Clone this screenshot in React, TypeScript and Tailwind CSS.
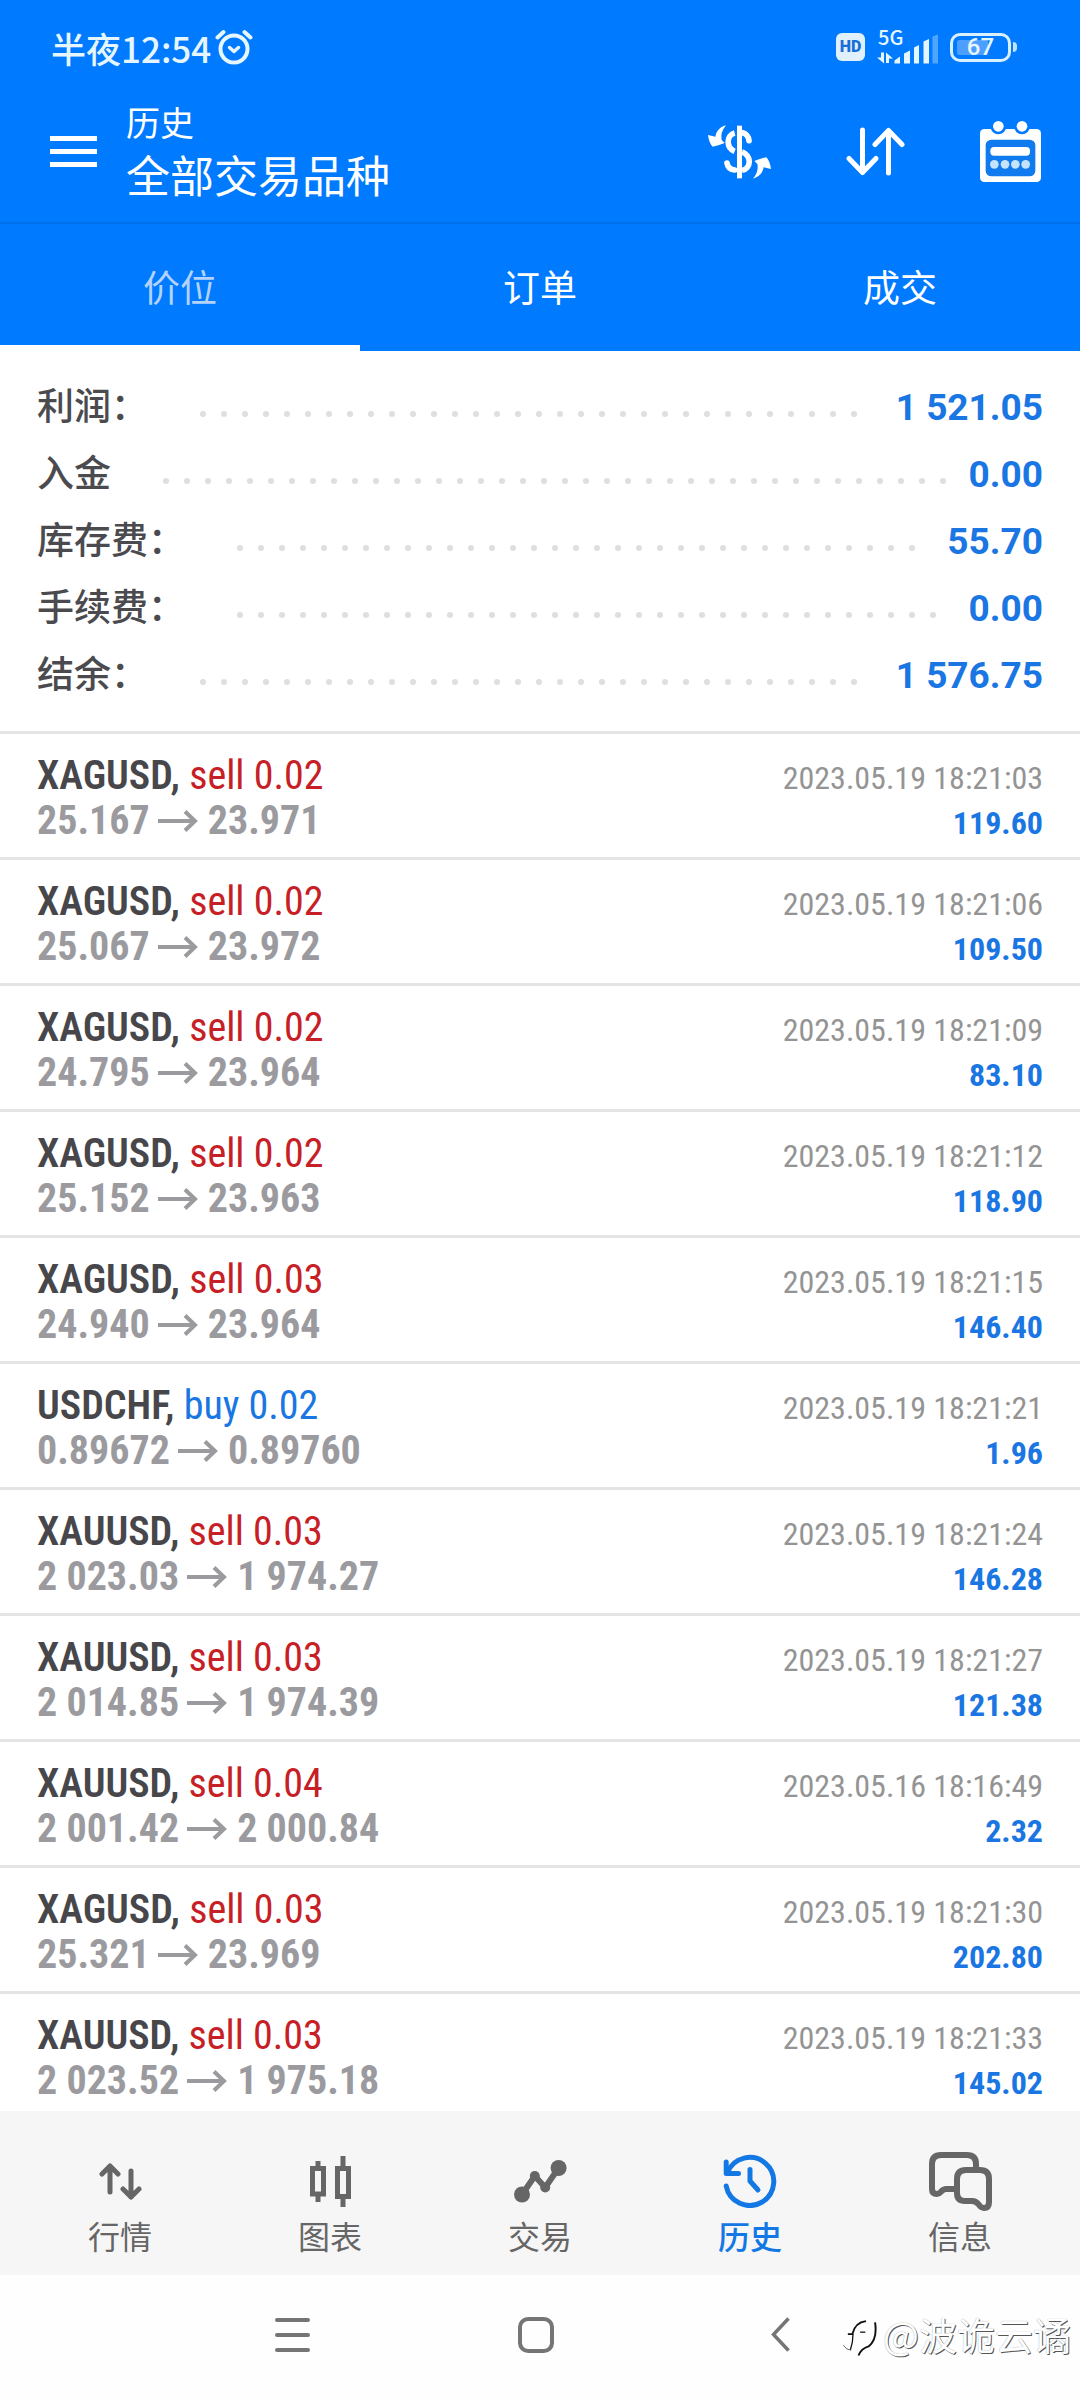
import React, { useState } from 'react';

const CJK = "font-['Roboto','Noto_Sans_CJK_SC',sans-serif]";

interface Trade {
  symbol: string;
  side: 'buy' | 'sell';
  volume: string;
  open: string;
  close: string;
  time: string;
  profit: string;
}

const SUMMARY = [
  { label: '利润：', value: '1 521.05' },
  { label: '入金', value: '0.00' },
  { label: '库存费：', value: '55.70' },
  { label: '手续费：', value: '0.00' },
  { label: '结余：', value: '1 576.75' },
];

const TRADES: Trade[] = [
  { symbol: 'XAGUSD', side: 'sell', volume: '0.02', open: '25.167', close: '23.971', time: '2023.05.19 18:21:03', profit: '119.60' },
  { symbol: 'XAGUSD', side: 'sell', volume: '0.02', open: '25.067', close: '23.972', time: '2023.05.19 18:21:06', profit: '109.50' },
  { symbol: 'XAGUSD', side: 'sell', volume: '0.02', open: '24.795', close: '23.964', time: '2023.05.19 18:21:09', profit: '83.10' },
  { symbol: 'XAGUSD', side: 'sell', volume: '0.02', open: '25.152', close: '23.963', time: '2023.05.19 18:21:12', profit: '118.90' },
  { symbol: 'XAGUSD', side: 'sell', volume: '0.03', open: '24.940', close: '23.964', time: '2023.05.19 18:21:15', profit: '146.40' },
  { symbol: 'USDCHF', side: 'buy', volume: '0.02', open: '0.89672', close: '0.89760', time: '2023.05.19 18:21:21', profit: '1.96' },
  { symbol: 'XAUUSD', side: 'sell', volume: '0.03', open: '2 023.03', close: '1 974.27', time: '2023.05.19 18:21:24', profit: '146.28' },
  { symbol: 'XAUUSD', side: 'sell', volume: '0.03', open: '2 014.85', close: '1 974.39', time: '2023.05.19 18:21:27', profit: '121.38' },
  { symbol: 'XAUUSD', side: 'sell', volume: '0.04', open: '2 001.42', close: '2 000.84', time: '2023.05.16 18:16:49', profit: '2.32' },
  { symbol: 'XAGUSD', side: 'sell', volume: '0.03', open: '25.321', close: '23.969', time: '2023.05.19 18:21:30', profit: '202.80' },
  { symbol: 'XAUUSD', side: 'sell', volume: '0.03', open: '2 023.52', close: '1 975.18', time: '2023.05.19 18:21:33', profit: '145.02' },
];

const TABS = ['价位', '订单', '成交'];

// status bar

const AlarmIcon = () => (
  <svg width="38" height="36" viewBox="0 0 38 36" fill="none" stroke="currentColor" strokeWidth="4" strokeLinecap="round" strokeLinejoin="round">
    <circle cx="19" cy="20" r="13.5" />
    <path d="M14.5 18.5 L19 22.5 L23.5 18.5" strokeWidth="3.5" />
    <path d="M2.5 8.5 L8.5 3 M29.5 3 L35.5 8.5" />
  </svg>
);

const SignalIcon = () => (
  <svg width="61" height="57" viewBox="0 -12 61 57" fill="currentColor">
    <text x="1" y="14" fontSize="20" fontWeight="500" className="font-['Noto_Sans_CJK_SC',sans-serif]">5G</text>
    <path d="M4 21.500 h3 v11 L0 26.500 h4z M9 32 v-10.500 l7 6 h-4 v4.500z" />
    <path d="M17.500 32.500 v-3 l5.500-4 v7z M27 32.500 v-10 l6-3 v13z M37 32.500 v-16 l5-2.500 v18.500z M46.500 32.500 v-22 l5.500-2.500 v24.500z" />
    <path d="M55.500 32.500 v-27 l5.500-2 v29z" opacity="0.35" />
  </svg>
);

const Battery = ({ level }: { level: number }) => (
  <div className="flex items-center gap-0.5">
    <div className="relative flex h-[29px] w-[61px] items-center justify-center rounded-[10px] border-3 border-[#d9f1ff]">
      <div className="absolute inset-y-1 left-1 right-1">
        <div className="h-full rounded-xs bg-[#4c9ffd]" style={{ width: `${level}%` }} />
      </div>
      <span className="relative text-2xl leading-none font-medium">{level}</span>
    </div>
    <div className="h-2.5 w-1 rounded-r-sm bg-[#bfe3ff]" />
  </div>
);

const StatusBar = () => (
  <div className="flex h-[78px] items-center justify-between pt-4 pr-[63px] pl-[51px] text-[#e6f6ff]">
    <div className="flex items-center gap-1 font-['Noto_Sans_CJK_SC',sans-serif] text-[35px] leading-none font-medium">
      <span>半夜12:54</span>
      <AlarmIcon />
    </div>
    <div className="flex items-center gap-3">
      <span className="flex h-7 w-[29px] items-center justify-center rounded-md bg-[#e0f1fd] text-base leading-none font-black text-[#1a6fd6]">
        HD
      </span>
      <SignalIcon />
      <Battery level={67} />
    </div>
  </div>
);

// app bar

const MenuIcon = () => (
  <svg width="47" height="31" viewBox="0 0 47 31" fill="currentColor">
    <path d="M0 0h47v5H0z M0 13h47v5H0z M0 26h47v5H0z" />
  </svg>
);

const CurrencyIcon = () => (
  <svg width="63" height="54" viewBox="54 43 189 162" fill="none" stroke="currentColor" strokeWidth="17">
    <path d="M148.500 45 V203" strokeWidth="15" />
    <path d="M134 67 C108 74 108 112 134 122" />
    <path d="M156 66 C168 68 176 78 177 90" strokeLinecap="round" />
    <path d="M111 157 C113 169 122 177 134 178" strokeLinecap="round" />
    <path d="M156 124 C186 134 184 174 156 179" />
    <path d="M108 44 C88 50 79 62 76 78 L54 73 Q57 97 68 108 Q88 104 104 97 L95 88 Q90 66 108 44z" fill="currentColor" stroke="none" />
    <path d="M189 204 C209 198 218 186 221 170 L243 175 Q240 151 229 140 Q209 144 193 151 L202 160 Q207 182 189 204z" fill="currentColor" stroke="none" />
  </svg>
);

const SortIcon = () => (
  <svg width="59" height="49" viewBox="0 0 59 49" fill="none" stroke="currentColor" strokeWidth="5" strokeLinecap="round" strokeLinejoin="round">
    <path d="M16.500 3 V45 M3 31.500 L16.500 45.500 L30 31.500" />
    <path d="M42.500 46 V4 M29 17.500 L42.500 3.500 L56 17.500" />
  </svg>
);

const CalendarIcon = () => (
  <svg width="61" height="61" viewBox="60 30 183 183">
    <rect x="60" y="54" width="183" height="159" rx="13" fill="#fff" />
    <rect x="77" y="86" width="149" height="110" rx="17" fill="#0f7bee" />
    <circle cx="115" cy="46" r="24" fill="#007aff" />
    <circle cx="186" cy="46" r="24" fill="#007aff" />
    <circle cx="115" cy="46" r="16" fill="#fff" />
    <circle cx="186" cy="46" r="16" fill="#fff" />
    <rect x="91" y="108" width="119" height="26" rx="11" fill="#fff" />
    <g fill="#c6e3fc">
      <circle cx="103" cy="160" r="13" />
      <circle cx="135" cy="160" r="13" />
      <circle cx="166" cy="160" r="13" />
      <circle cx="197" cy="160" r="13" />
    </g>
  </svg>
);

const AppBar = () => (
  <div className="flex h-[146px] items-center border-b-2 border-[#0070ea] pt-[3px] pr-[39px] pl-[50px] text-white">
    <button type="button" aria-label="菜单">
      <MenuIcon />
    </button>
    <div className="ml-[29px] flex-1 pt-1">
      <div className="text-[34px] leading-[48px]">历史</div>
      <h1 className="text-[44px] leading-[60px]">全部交易品种</h1>
    </div>
    <div className="flex items-center gap-[75px]">
      <button type="button" aria-label="货币"><CurrencyIcon /></button>
      <button type="button" aria-label="排序"><SortIcon /></button>
      <button type="button" aria-label="日期"><CalendarIcon /></button>
    </div>
  </div>
);

// summary

const Summary = () => (
  <dl className="border-b-3 border-[#e4e4e4] px-[37px] pt-[23px] pb-[22px]">
    {SUMMARY.map((row) => (
      <div key={row.label} className="flex h-[67px] items-center text-[37px] leading-[67px]">
        <dt className="font-medium text-[#4b4b4f]">{row.label}</dt>
        <div className="mt-3 mr-5 ml-[52px] flex h-1.5 flex-1 flex-wrap gap-x-[15px] gap-y-4 overflow-hidden">
          {Array.from({ length: 50 }, (_, i) => (
            <span key={i} className="size-1.5 rounded-full bg-[#dfdfdf]" />
          ))}
        </div>
        <dd className="font-bold text-[#1976e2]">{row.value}</dd>
      </div>
    ))}
  </dl>
);

// trades

const PriceArrow = () => (
  <svg className="mr-2.5 ml-2" width="40" height="22" viewBox="0 0 40 22" fill="none" stroke="currentColor" strokeWidth="4">
    <path d="M0 11 H37 M27 1.500 L37 11 L27 20.500" />
  </svg>
);

const TradeRow = ({ trade }: { trade: Trade }) => (
  <li className="border-b-3 border-[#e4e4e4] px-[37px] pt-[19px] pb-3.5 font-['Roboto_Condensed','Roboto',sans-serif]">
    <div className="flex items-baseline justify-between">
      <div className="text-[40px] leading-[45px]">
        <span className="font-semibold text-[#47474b]">{trade.symbol},</span>{' '}
        <span className={trade.side === 'sell' ? 'text-[#c62026]' : 'text-[#1976e2]'}>
          {trade.side} {trade.volume}
        </span>
      </div>
      <div className="text-[32px] leading-9 text-[#949494]">{trade.time}</div>
    </div>
    <div className="flex items-baseline justify-between">
      <div className="flex items-center text-[40px] leading-[45px] font-bold text-[#9b9b9f]">
        {trade.open}
        <PriceArrow />
        {trade.close}
      </div>
      <div className="text-[32px] leading-9 font-bold text-[#1976e2]">{trade.profit}</div>
    </div>
  </li>
);

// bottom navigation

const QuotesIcon = () => (
  <svg width="43" height="37" viewBox="0 0 43 37" fill="none" stroke="currentColor" strokeWidth="5" strokeLinecap="round" strokeLinejoin="round">
    <path d="M11 3 V29 M3 11 L11 3 L19 11" />
    <path d="M32 8 V34 M24 26 L32 34 L40 26" />
  </svg>
);

const ChartIcon = () => (
  <svg width="41" height="51" viewBox="0 0 41 51" fill="none" stroke="currentColor" strokeWidth="5">
    <path d="M2.500 12.500 h11 v25.500 h-11z M27.500 12.500 h11 v28 h-11z" />
    <path d="M8 5 V12 M8 38 V46 M33 0 V12 M33 41 V51" />
  </svg>
);

const TradeIcon = () => (
  <svg width="53" height="43" viewBox="0 0 53 43" fill="currentColor">
    <path d="M8 34.500 L20.800 16 L31.200 27.500 L44.600 8" fill="none" stroke="currentColor" strokeWidth="6" />
    <circle cx="8" cy="34.500" r="8" />
    <circle cx="20.800" cy="16" r="5" />
    <circle cx="31.200" cy="27.500" r="5" />
    <circle cx="44.600" cy="8" r="8" />
  </svg>
);

const HistoryIcon = () => (
  <svg width="54" height="54" viewBox="0 0 54 54" fill="none" stroke="currentColor" strokeWidth="5" strokeLinecap="round" strokeLinejoin="round">
    <path d="M3.200 32 A24 24 0 1 0 4.500 18.500" />
    <path d="M3.200 8 V19.500 H15.500" />
    <path d="M27 15.500 V27 L35 36" />
  </svg>
);

const MessagesIcon = () => (
  <svg width="63" height="59" viewBox="0 0 63 59" fill="none" stroke="currentColor" strokeWidth="6">
    <path d="M47 17 V12 Q47 3 38 3 H12 Q3 3 3 12 V37 Q3 42 8 42 C12 42 12 37 17 37 H27" />
    <path d="M60 51 V27 Q60 18 51 18 H37 Q28 18 28 27 V41 Q28 49 36 49 H43 C51 49 49 56 55 56 Q60 56 60 50" />
  </svg>
);

const NAV_ITEMS = [
  { label: '行情', icon: <QuotesIcon /> },
  { label: '图表', icon: <ChartIcon /> },
  { label: '交易', icon: <TradeIcon /> },
  { label: '历史', icon: <HistoryIcon /> },
  { label: '信息', icon: <MessagesIcon /> },
];

const BottomNav = () => {
  const [current, setCurrent] = useState('历史');

  return (
    <nav className="flex shrink-0 bg-[#f6f6f6] px-[15px] pt-[38px] pb-3">
      {NAV_ITEMS.map((item) => (
        <button
          key={item.label}
          type="button"
          onClick={() => setCurrent(item.label)}
          className={`flex flex-1 flex-col items-center text-[32px] leading-[50px] ${
            current === item.label ? 'font-medium text-[#1478e4]' : 'text-[#666]'
          }`}
        >
          <span className="flex h-16 items-center">{item.icon}</span>
          {item.label}
        </button>
      ))}
    </nav>
  );
};

const Watermark = () => (
  <div className="absolute top-8 right-[9px] flex items-center gap-1.5">
    <svg className="mt-2" width="35" height="40" viewBox="36 76 108 120" fill="none" stroke="#111" strokeWidth="6">
      <path d="M54 124 H68 Q76 88 110 84" />
      <path d="M138 88 Q146 140 118 162 Q96 168 87 190" />
      <path d="M70 124 Q70 150 62 172" strokeWidth="4" />
      <path d="M64 174 Q48 172 40 158" strokeWidth="2" />
      <path d="M92 118 H108" strokeWidth="4" />
    </svg>
    <span className="font-['Noto_Sans_CJK_SC',sans-serif] text-[38px] leading-[54px] text-white [text-shadow:1px_1px_0_#555,0_0_1px_#999]">
      @波诡云谲
    </span>
  </div>
);

const SystemNav = () => (
  <div className="relative flex h-[125px] shrink-0 items-center justify-between bg-[#fefefe] pr-[282px] pl-[274px] pb-1.5 text-[#757575]">
    <button type="button" aria-label="最近任务" className="flex w-9 justify-center">
      <svg width="35" height="34" viewBox="0 0 35 34" stroke="currentColor" strokeWidth="4" strokeLinecap="round">
        <path d="M2 2 H33 M2 17 H33 M2 32 H33" />
      </svg>
    </button>
    <button type="button" aria-label="主屏幕" className="flex w-9 justify-center">
      <svg width="36" height="36" viewBox="0 0 36 36" fill="none" stroke="currentColor" strokeWidth="4">
        <rect x="2" y="2" width="32" height="32" rx="8" />
      </svg>
    </button>
    <button type="button" aria-label="返回" className="flex w-9 justify-center">
      <svg width="19" height="35" viewBox="0 0 19 35" fill="none" stroke="currentColor" strokeWidth="3.500">
        <path d="M17.500 1.500 L2.500 17.500 L17.500 33.500" />
      </svg>
    </button>
    <Watermark />
  </div>
);

const App = () => {
  const [tab, setTab] = useState(TABS[0]);

  return (
    <div className={`flex h-screen flex-col overflow-hidden bg-white ${CJK}`}>
      <header className="shrink-0 bg-[#007aff]">
        <StatusBar />
        <AppBar />
        <div className="flex text-white">
          {TABS.map((name) => (
            <button
              key={name}
              type="button"
              onClick={() => setTab(name)}
              className={`flex-1 border-b-6 pt-[38px] pb-7 text-[37px] leading-[55px] ${
                tab === name ? 'border-white text-[#b3d3fb]' : 'border-transparent'
              }`}
            >
              {name}
            </button>
          ))}
        </div>
      </header>

      <main className="min-h-0 flex-1 overflow-y-auto [scrollbar-width:none]">
        <Summary />
        <ul>
          {TRADES.map((trade) => (
            <TradeRow key={trade.time} trade={trade} />
          ))}
        </ul>
      </main>

      <BottomNav />
      <SystemNav />
    </div>
  );
};

export default App;
